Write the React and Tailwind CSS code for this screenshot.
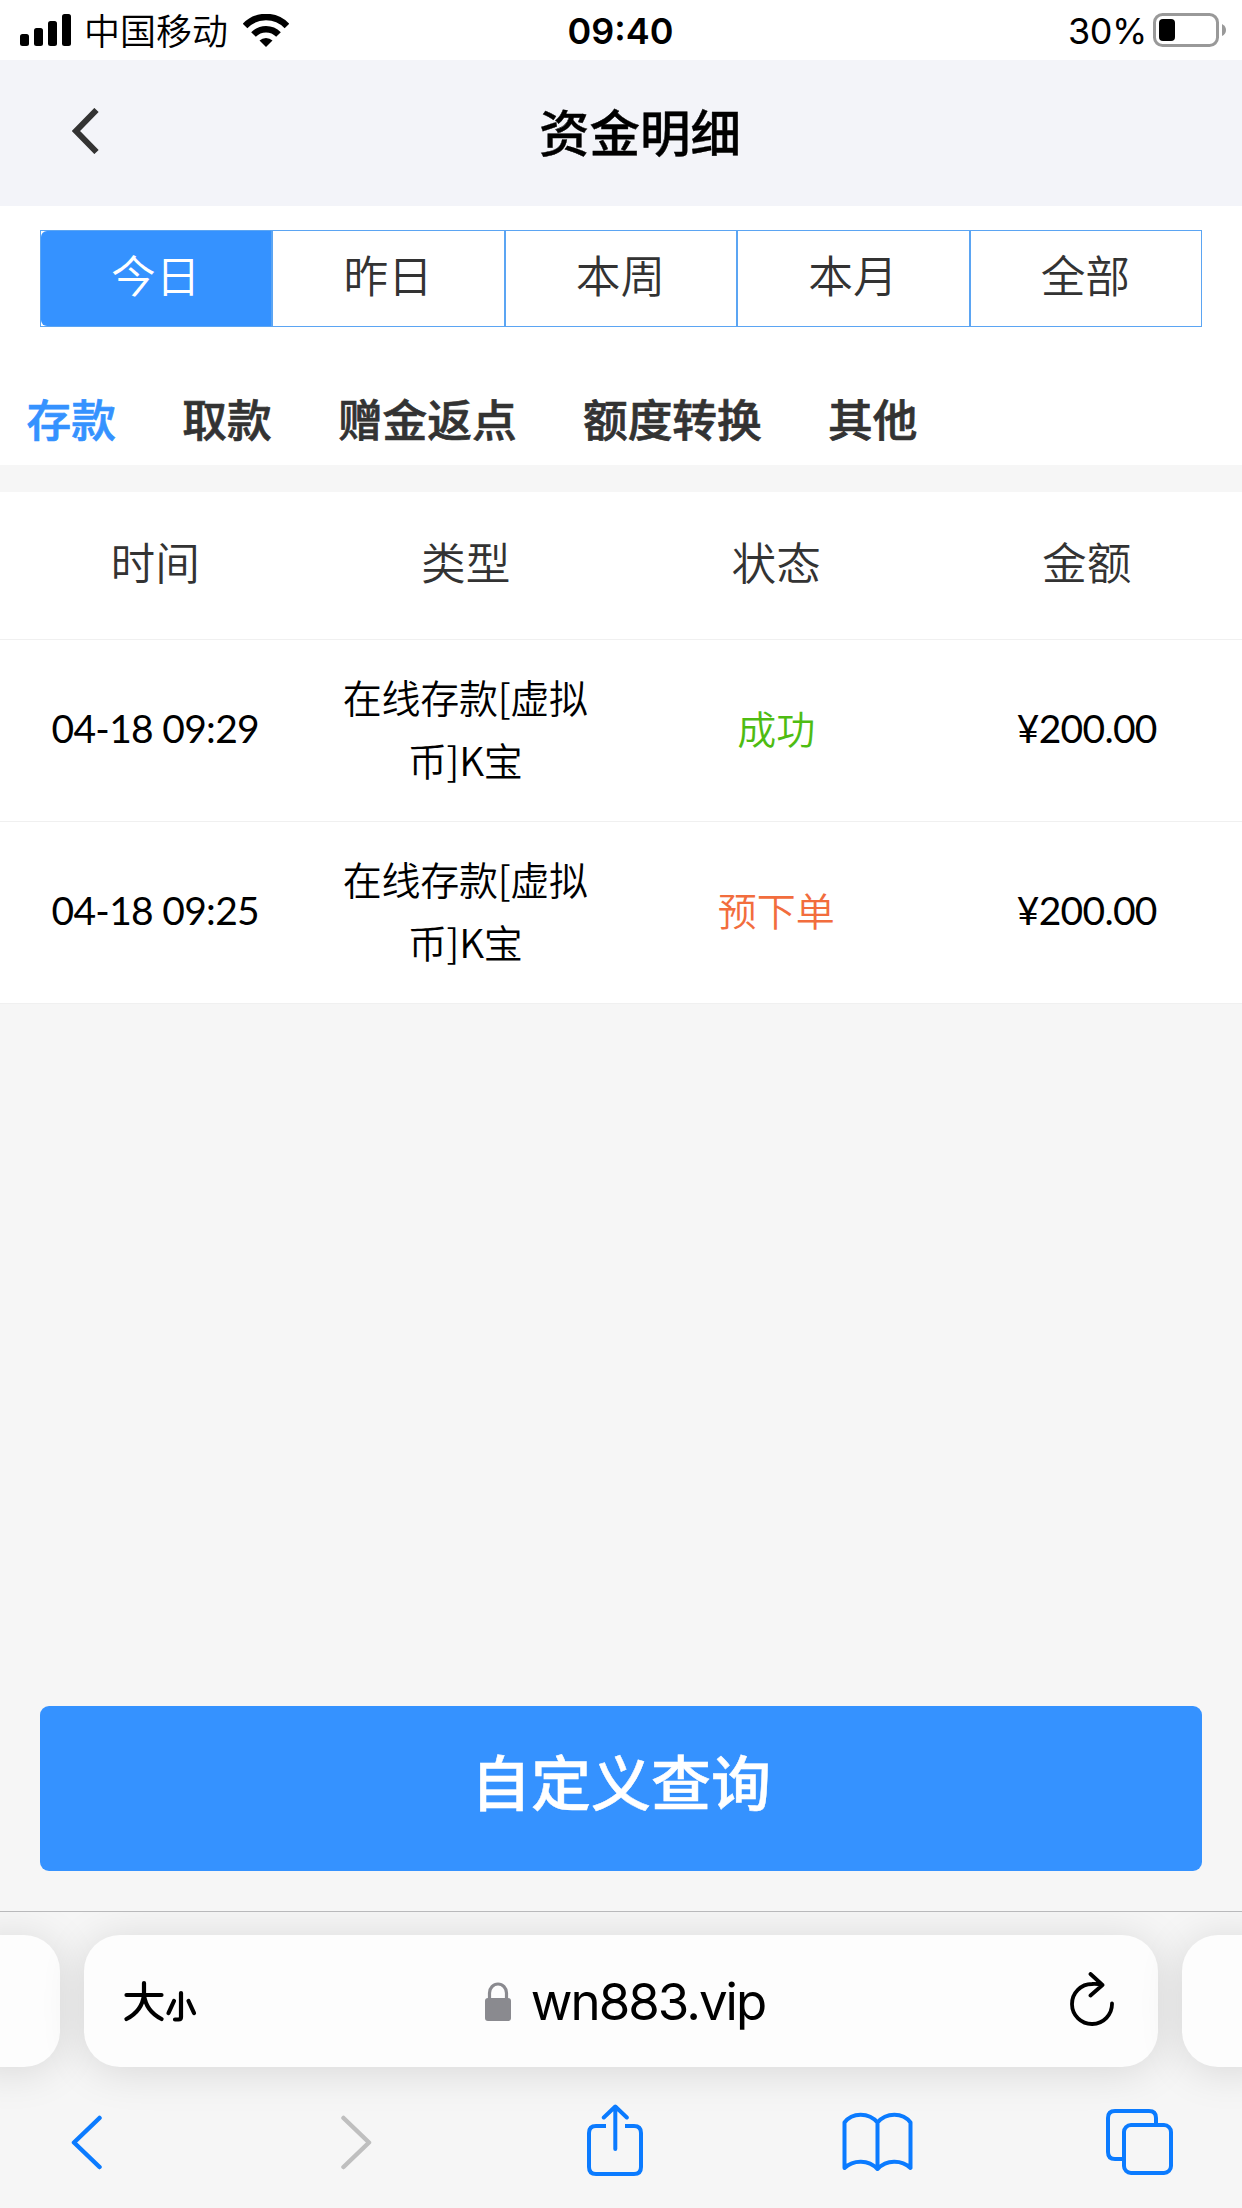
import React, { useState } from "react";

const dateTabs = ["今日", "昨日", "本周", "本月", "全部"];
const categories = ["存款", "取款", "赠金返点", "额度转换", "其他"];
const columns = ["时间", "类型", "状态", "金额"];

const records = [
  { id: 1, time: "04-18 09:29", type: ["在线存款[虚拟", "币]K宝"], status: "成功", statusClass: "text-[#4ebc12]", amount: "¥200.00" },
  { id: 2, time: "04-18 09:25", type: ["在线存款[虚拟", "币]K宝"], status: "预下单", statusClass: "text-[#f26d3d]", amount: "¥200.00" },
];

const StatusBar = () => (
  <div className="grid h-[60px] grid-cols-3 items-center bg-white pl-5 pr-4 font-['Inter','Noto_Sans_CJK_SC',sans-serif] text-4xl leading-none text-black">
    <div className="flex items-center">
      <svg className="h-8 w-[51px]" viewBox="0 0 51 32">
        <rect x="0" y="20" width="9" height="12" rx="2.5" />
        <rect x="14" y="14" width="9" height="18" rx="2.5" />
        <rect x="28" y="7" width="9" height="25" rx="2.5" />
        <rect x="42" y="0" width="9" height="32" rx="2.5" />
      </svg>
      <span className="ml-[13px] pt-[3px] font-[350]">中国移动</span>
      <svg className="ml-[15px] h-[33px] w-[46px]" viewBox="0 0 46 33">
        <path d="M2 12a29 29 0 0 1 42 0" fill="none" stroke="#000" strokeWidth="6.5" />
        <path d="M10.5 20.5a17.500 17.500 0 0 1 25 0" fill="none" stroke="#000" strokeWidth="6.5" />
        <path d="M16.5 26.5a9.5 9.5 0 0 1 13 0L23 33z" />
      </svg>
    </div>
    <span className="pr-[5px] pt-[2px] text-center font-semibold">09:40</span>
    <div className="flex items-center justify-end">
      <span className="pt-[2px] tracking-[-0.4px]">30%</span>
      <svg className="-mr-px ml-[6px] h-[34px] w-[74px]" viewBox="0 0 74 34">
        <rect x="1.5" y="1.5" width="63" height="31" rx="8" fill="none" stroke="#999" strokeWidth="3" />
        <rect x="6" y="6" width="16" height="22" rx="4" />
        <path d="M69 11q4 2 4 6t-4 6z" fill="#999" />
      </svg>
    </div>
  </div>
);

const Browser = () => (
  <footer className="h-[297px] overflow-hidden border-t border-[#b9b9bb] bg-[#f6f6f6] pt-[23px]">
    <div className="-mx-9 flex h-[132px] gap-6">
      <div className="w-24 rounded-[36px] bg-[#fdfdfd] shadow-[0_4px_44px_rgba(0,0,0,0.13)]" />
      <div className="flex flex-1 items-center rounded-[36px] bg-[#fdfdfd] pl-10 pr-11 text-black shadow-[0_4px_44px_rgba(0,0,0,0.13)]">
        <svg className="h-[42px] w-[74px]" viewBox="0 0 74 42" fill="none" stroke="#000" strokeWidth="4.2" strokeLinecap="round" strokeLinejoin="round">
          <path d="M2.5 15h35M20 3v12q-2 16-17.500 24M20 15q2 16 17.500 24" />
          <path d="M57 13v24q0 2.500-2.500 2.500H51M50 21l-5.500 12M64.500 21l5.500 12" />
        </svg>
        <div className="flex flex-1 items-center justify-center pr-[18px]">
          <svg className="h-[39px] w-[26px]" viewBox="0 0 26 39" fill="#8a8a8f">
            <rect x="0" y="16" width="26" height="23" rx="3" />
            <path d="M4.500 17v-6a8.500 9 0 0 1 17 0v6" fill="none" stroke="#8a8a8f" strokeWidth="3.200" />
          </svg>
          <span className="ml-[20px] pt-[1px] font-['Inter',sans-serif] text-[51px] leading-none tracking-[-2px]">wn883.vip</span>
        </div>
        <svg className="-mt-1 h-[54px] w-11" viewBox="0 0 44 54" fill="none" stroke="#000" strokeWidth="3.800" strokeLinecap="round" strokeLinejoin="round">
          <path d="M42 31.500a20 20 0 1 1-20-19.500q6-.3 10.500 1M20.500 2l12 11-12 10.500" />
        </svg>
      </div>
      <div className="w-24 rounded-[36px] bg-[#fdfdfd] shadow-[0_4px_44px_rgba(0,0,0,0.13)]" />
    </div>
    <div className="flex h-[150px] items-center pl-[71px]">
      <svg className="h-[55px] w-[31px]" viewBox="0 0 31 54" fill="none" stroke="#0b7bff" strokeWidth="4.500" strokeLinecap="round" strokeLinejoin="round">
        <path d="M28.500 2.500L3 27l25.500 24.500" />
      </svg>
      <svg className="ml-[239px] h-[55px] w-[31px]" viewBox="0 0 31 54" fill="none" stroke="#bfbfbf" strokeWidth="4.500" strokeLinecap="round" strokeLinejoin="round">
        <path d="M2.500 2.500L28 27 2.500 51.500" />
      </svg>
      <svg className="-mt-1 ml-[215px] h-[72px] w-[57px]" viewBox="0 0 57 72" fill="none" stroke="#0b7bff" strokeWidth="4">
        <path d="M19 22H9q-7 0-7 7v34q0 7 7 7h38q7 0 7-7V29q0-7-7-7h-9" />
        <path d="M28.300 45V3M16.800 13.500L28.300 2.500l11.500 11" strokeLinecap="round" strokeLinejoin="round" />
      </svg>
      <svg className="ml-[198px] h-[60px] w-[71px]" viewBox="0 0 71 60" fill="none" stroke="#0b7bff" strokeWidth="4" strokeLinecap="round" strokeLinejoin="round">
        <path d="M35.500 10.500C27 0 10 0 2.500 10.500V56c9-8.500 24-8.500 33 1 9-9.500 24-9.500 33-1V10.500C61 0 44 0 35.500 10.500zV57" />
      </svg>
      <svg className="ml-[193px] h-[66px] w-[67px]" viewBox="0 0 67 66" fill="none" stroke="#0b7bff" strokeWidth="4">
        <path d="M50 15V9q0-7-7-7H9Q2 2 2 9v34q0 7 7 7h8" />
        <rect x="18" y="16" width="47" height="48" rx="7" />
      </svg>
    </div>
  </footer>
);

const App = () => {
  const [activeDate, setActiveDate] = useState("今日");
  const [activeCategory, setActiveCategory] = useState("存款");

  return (
    <div className="flex h-[2208px] w-[1242px] flex-col overflow-hidden bg-[#f6f6f6] font-['Lato','Noto_Sans_CJK_SC',sans-serif]">
      <StatusBar />

      {/* Page header */}
      <header className="flex h-[146px] items-center bg-[#f3f4f9] pl-[72px]">
        <svg className="-mt-[5px] h-[46px] w-[27px]" viewBox="0 0 27 46" fill="none" stroke="#333" strokeWidth="6">
          <path d="M24.500 2L4 23l20.500 21" />
        </svg>
        <h1 className="mr-[61px] flex-1 text-center text-[50.5px] font-medium leading-none text-black [-webkit-text-stroke:0.4px]">资金明细</h1>
      </header>

      <div className="bg-white px-10 pt-6">
        {/* Date range */}
        <div className="flex h-[97px] border border-[#5ba5f3]">
          {dateTabs.map((tab) => (
            <button
              key={tab}
              onClick={() => setActiveDate(tab)}
              className={`flex-1 border-r-2 border-[#5ba5f3] pb-1 pr-px text-[44.7px] font-[350] leading-none last:border-r-0 ${
                tab === activeDate ? "rounded-l-md bg-[#3592ff] text-white" : "text-[#333]"
              }`}
            >
              {tab}
            </button>
          ))}
        </div>
      </div>

      {/* Category tabs */}
      <nav className="flex h-[138px] items-center gap-[66.300px] bg-white pl-[26.500px] pt-[48px]">
        {categories.map((name) => (
          <button
            key={name}
            onClick={() => setActiveCategory(name)}
            className={`text-[44.7px] font-medium leading-none [-webkit-text-stroke:0.7px] ${name === activeCategory ? "text-[#3592ff]" : "text-[#333]"}`}
          >
            {name}
          </button>
        ))}
      </nav>

      {/* Records */}
      <section className="mt-[27px] bg-white text-center">
        <div className="grid h-[148px] grid-cols-4 items-center border-b border-[#f0f0f0] pb-1 text-[44.7px] font-[350] leading-none text-[#333]">
          {columns.map((col) => (
            <span key={col}>{col}</span>
          ))}
        </div>
        {records.map((row) => (
          <div key={row.id} className="grid h-[182px] grid-cols-4 items-center border-b border-[#f0f0f0] text-[39px] leading-[63px] text-black">
            <span className="pb-[5px] tracking-[-0.7px]">{row.time}</span>
            <span className="pb-[6px] pr-px font-['Noto_Sans_CJK_SC',sans-serif] font-[350] tracking-[-0.3px]">
              {row.type[0]}
              <br />
              {row.type[1]}
            </span>
            <span className={`pb-[2px] font-[350] ${row.statusClass}`}>{row.status}</span>
            <span className="pb-[5px] tracking-[-0.7px]">{row.amount}</span>
          </div>
        ))}
      </section>

      <div className="mt-auto px-10 pb-10">
        <button className="h-[165px] w-full rounded-[9px] bg-[#3592ff] pb-3 text-[60px] font-medium leading-none text-white [-webkit-text-stroke:0.5px]">自定义查询</button>
      </div>

      <Browser />
    </div>
  );
};

export default App;
